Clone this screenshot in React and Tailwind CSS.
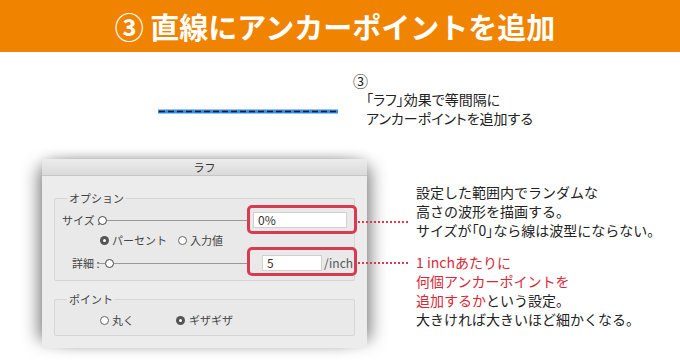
import React from 'react';

const jp = { fontFamily: '"Noto Sans CJK JP", "Noto Sans", sans-serif' };

// Radio button glyph (mac style)
const Radio = ({ on }) =>
  on ? (
    <span className="w-[9px] h-[9px] rounded-full bg-[#555] flex items-center justify-center shrink-0">
      <span className="w-[3px] h-[3px] rounded-full bg-white" />
    </span>
  ) : (
    <span className="w-[9px] h-[9px] rounded-full border border-[#666] bg-white shrink-0" />
  );

// Slider: track with knob at the left end
const Slider = ({ lead }) => (
  <div className="flex-1 flex items-center">
    {lead && <span className="w-[8px] h-px bg-[#999]" />}
    <span className="w-[9px] h-[9px] rounded-full border-[1.5px] border-[#444] bg-white shrink-0" />
    <span className="flex-1 h-px bg-[#999]" />
  </div>
);

// Red highlight frame around an input
const Highlight = () => (
  <span className="absolute -left-[6px] -top-[7px] w-[110px] h-[29px] border-[3px] border-[#d83a4f] rounded-[5px] pointer-events-none" />
);

const Dotted = ({ top }) => (
  <span
    className={`absolute left-[358px] w-[50px] border-t-2 border-dotted border-[#d83a4f] ${top}`}
  />
);

export default function App() {
  return (
    <div className="w-[680px] h-[363px] bg-white overflow-hidden text-[#222]" style={jp}>
      {/* Title bar */}
      <div className="h-[52px] bg-[#f08300] flex items-center justify-center pr-[10px]">
        <h1 className="text-white text-[29px] font-bold leading-none">
          ③ 直線にアンカーポイントを追加
        </h1>
      </div>

      {/* Line sample and note */}
      <div className="h-[107px] flex items-start">
        <svg className="ml-[158px] mt-[57px]" width="180" height="5" viewBox="0 0 180 5">
          <line x1="0" y1="2.5" x2="180" y2="2.5" stroke="#2f8ff2" strokeWidth="4" />
          <line x1="1" y1="2.5" x2="180" y2="2.5" stroke="#1a1a1a" strokeWidth="1.4" strokeDasharray="6 3" />
        </svg>
        <div className="ml-[15px] mt-[19px] text-[14px] leading-[19px] [font-feature-settings:'palt']">
          <div className="text-[15px]">③</div>
          <div className="pl-[13px]">「ラフ」効果で等間隔に</div>
          <div className="pl-[13px]">アンカーポイントを追加する</div>
        </div>
      </div>

      {/* Dialog and notes */}
      <div className="relative flex items-start">
        <div className="ml-[42px] w-[325px] bg-[#ececec] shadow-[-12px_0_16px_-8px_rgba(0,0,0,0.45),12px_0_16px_-8px_rgba(0,0,0,0.45),0_-4px_12px_-4px_rgba(0,0,0,0.2)] rounded-t-[3px] text-[11px] text-[#444]">
          <div className="h-[17px] bg-gradient-to-b from-[#ececec] to-[#dadada] border-b border-[#c6c6c6] rounded-t-[3px] flex items-center justify-center text-[11px] text-[#333]">
            ラフ
          </div>

          <div className="px-[12px] pt-[15px] pb-[12px]">
            <fieldset className="border border-[#d6d6d6] rounded-[2px] bg-[#e9e9e9] px-[7px] pb-[7px]">
              <legend className="ml-[5px] px-[2px] leading-[14px]">オプション</legend>

              <div className="h-[20px] mt-[5px] flex items-center">
                <span className="w-[36px] whitespace-nowrap">サイズ :</span>
                <Slider />
                <div className="relative ml-[6px] w-[94px]">
                  <div className="w-[94px] h-[16px] bg-white border border-[#d0d0d0] pl-[4px] text-[12px] leading-[14px] text-[#333]">
                    0%
                  </div>
                  <Highlight />
                </div>
              </div>

              <div className="h-[20px] flex items-center gap-[3px] pl-[38px]">
                <Radio on />
                <span className="mr-[8px]">パーセント</span>
                <Radio />
                <span>入力値</span>
              </div>

              <div className="h-[20px] mt-[3px] flex items-center">
                <span className="w-[35px] pl-[10px] whitespace-nowrap">詳細 :</span>
                <Slider lead />
                <div className="relative ml-[6px] w-[94px]">
                  <div className="flex items-center">
                    <div className="ml-[9px] w-[60px] h-[16px] shrink-0 bg-white border border-[#d0d0d0] pl-[4px] text-[12px] leading-[14px] text-[#333]">
                      5
                    </div>
                    <span className="ml-[2px] text-[12px] text-[#555] whitespace-nowrap">/inch</span>
                  </div>
                  <Highlight />
                </div>
              </div>
            </fieldset>

            <fieldset className="mt-[11px] border border-[#d6d6d6] rounded-[2px] bg-[#e9e9e9] px-[7px] pb-[5px]">
              <legend className="ml-[5px] px-[2px] leading-[14px]">ポイント</legend>
              <div className="h-[20px] mt-[4px] flex items-center gap-[3px] pl-[38px]">
                <Radio />
                <span className="mr-[39px]">丸く</span>
                <Radio on />
                <span className="ml-[1px]">ギザギザ</span>
              </div>
            </fieldset>
          </div>
        </div>

        <Dotted top="top-[62px]" />
        <Dotted top="top-[103px]" />

        <div className="ml-[49px] mt-[24px] text-[14px] leading-[19px] whitespace-nowrap">
          <p>設定した範囲内でランダムな</p>
          <p>高さの波形を描画する。</p>
          <p>サイズが<span className="[font-feature-settings:'palt']">「0」</span>なら線は波型にならない。</p>
          <p className="mt-[13px] text-[#d7283a]">1 inchあたりに</p>
          <p className="text-[#d7283a]">何個アンカーポイントを</p>
          <p>
            <span className="text-[#d7283a]">追加するか</span>という設定。
          </p>
          <p>大きければ大きいほど細かくなる。</p>
        </div>
      </div>
    </div>
  );
}
